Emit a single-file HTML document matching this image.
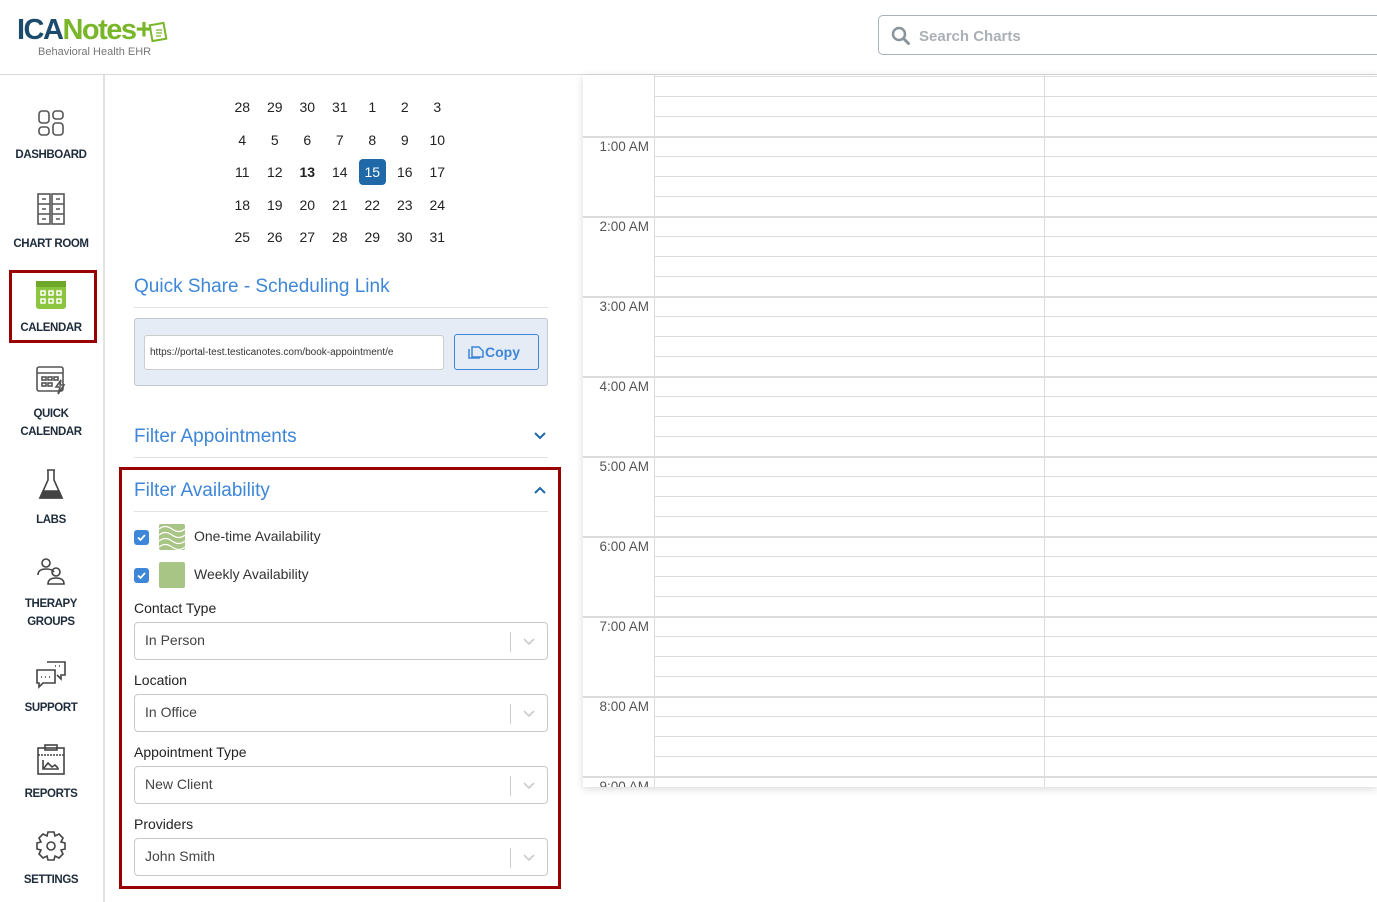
<!DOCTYPE html>
<html><head><meta charset="utf-8"><style>
*{box-sizing:border-box;margin:0;padding:0}
body{width:1377px;height:902px;overflow:hidden;background:#fff;font-family:"Liberation Sans",sans-serif;color:#222;position:relative}
.abs{position:absolute}
.top{left:0;top:0;width:1377px;height:75px;border-bottom:1px solid #d8d8d8;background:#fff}
.side{left:0;top:75px;width:105px;height:827px;border-right:2px solid #e2e2e2;background:#fff}
.nav{position:absolute;left:0;width:102px;text-align:center;font-size:11.5px;font-weight:bold;color:#1d2b3a;line-height:18px;letter-spacing:-.4px}
.nav svg{display:block;margin:0 auto 9px}
.cal td{width:32.5px;height:32.5px;text-align:center;font-size:14px;color:#222}
.h{color:#3d86d8;font-size:19px}
.sel{border:1px solid #c9c9c9;border-radius:4px;height:38px;width:414px;left:134px;font-size:14px;color:#444;padding:9px 10px}
.sel .dv{position:absolute;right:36px;top:9px;width:1px;height:20px;background:#ccc}
.sel svg{position:absolute;right:11px;top:14px}
.lbl{left:134px;font-size:14px;color:#222}
.grid{left:583px;top:75px;width:794px;height:712px;box-shadow:0 2px 8px rgba(0,0,0,.15);background:#fff;overflow:hidden}
.tl{position:absolute;left:0;width:66px;text-align:right;font-size:13.5px;color:#555}
</style></head><body>
<div class="abs top">
 <div class="abs" style="left:17px;top:12px;font-size:29px;font-weight:bold;letter-spacing:-1.5px;line-height:36px"><span style="color:#1c4b6b">ICA</span><span style="color:#7ab629">Notes+</span></div>
 <svg class="abs" style="left:148px;top:21px" width="20" height="22" viewBox="0 0 20 22"><rect x="3" y="3" width="14" height="16" transform="rotate(-10 10 11)" fill="none" stroke="#7ab629" stroke-width="2"/><path d="M8 9h6M8 12h6M8 15h5" stroke="#7ab629" stroke-width="1.3"/></svg>
 <div class="abs" style="left:38px;top:46px;font-size:11px;color:#777">Behavioral Health EHR</div>
 <div class="abs" style="left:878px;top:15px;width:520px;height:40px;border:1px solid #a9b2bb;border-radius:5px">
  <svg class="abs" style="left:12px;top:10px" width="20" height="20" viewBox="0 0 20 20"><circle cx="8" cy="8" r="6" fill="none" stroke="#8b939b" stroke-width="2.5"/><path d="M12.5 12.5l5 5" stroke="#8b939b" stroke-width="3" stroke-linecap="round"/></svg>
  <div class="abs" style="left:40px;top:12px;font-size:15px;color:#aab0b6;font-weight:bold">Search Charts</div>
 </div>
</div>
<div class="abs side">
 <div class="nav" style="top:34px"><svg width="28" height="28" viewBox="0 0 28 28" fill="none" stroke="#555" stroke-width="1.6"><rect x="2" y="2" width="10" height="12" rx="3"/><rect x="16" y="2" width="10" height="8" rx="3"/><rect x="2" y="18" width="10" height="8" rx="3"/><rect x="16" y="14" width="10" height="12" rx="3"/></svg>DASHBOARD</div>
 <div class="nav" style="top:118px"><svg width="30" height="33" viewBox="0 0 30 33" fill="none" stroke="#555" stroke-width="1.6"><rect x="2" y="1" width="12" height="30"/><rect x="16" y="1" width="12" height="30"/><path d="M2 11h12M2 21h12M16 11h12M16 21h12M6 6h4M6 16h4M6 26h4M20 6h4M20 16h4M20 26h4"/></svg>CHART ROOM</div>
 <div class="nav" style="top:203px"><svg width="32" height="32" viewBox="0 0 32 32"><rect x="1" y="3" width="30" height="28" rx="3" fill="#8cc63f"/><rect x="1" y="3" width="30" height="6" fill="#6ea82a"/><g fill="none" stroke="#fff" stroke-width="1.5"><rect x="6" y="13" width="4" height="4"/><rect x="14" y="13" width="4" height="4"/><rect x="22" y="13" width="4" height="4"/><rect x="6" y="21" width="4" height="4"/><rect x="14" y="21" width="4" height="4"/><rect x="22" y="21" width="4" height="4"/></g></svg>CALENDAR</div>
 <div class="nav" style="top:289px"><svg width="32" height="32" viewBox="0 0 32 32" fill="none" stroke="#555" stroke-width="1.6"><rect x="2" y="3" width="26" height="24" rx="2"/><path d="M2 9h26"/><rect x="7" y="13" width="4" height="3"/><rect x="13" y="13" width="4" height="3"/><rect x="19" y="13" width="4" height="3"/><rect x="7" y="19" width="4" height="3"/><rect x="13" y="19" width="4" height="3"/><path d="M26 16l-5 7h4l-2 7 6-9h-4z" fill="#fff"/></svg>QUICK<br>CALENDAR</div>
 <div class="nav" style="top:393px"><svg width="28" height="34" viewBox="0 0 28 34" fill="none" stroke="#444" stroke-width="1.6"><path d="M10 2h8M11 2v10L3 30h22L17 12V2"/><path d="M6 23h16l3 7H3z" fill="#444"/></svg>LABS</div>
 <div class="nav" style="top:481px"><svg width="30" height="30" viewBox="0 0 30 30" fill="none" stroke="#444" stroke-width="1.6"><circle cx="10" cy="7" r="4"/><path d="M2 19c0-5 4-6 8-6s7 1 8 3"/><circle cx="20" cy="16" r="4"/><path d="M12 28c0-5 4-6 8-6s8 1 8 6z"/></svg>THERAPY<br>GROUPS</div>
 <div class="nav" style="top:585px"><svg width="32" height="30" viewBox="0 0 32 30" fill="none" stroke="#444" stroke-width="1.6"><path d="M12 2h18v13h-4v4l-4-4"/><path d="M2 10h18v13H8l-4 4v-4H2z" fill="#fff"/><path d="M6 17h1M10 17h1M14 17h1M20 6h1M24 6h1"/></svg>SUPPORT</div>
 <div class="nav" style="top:669px"><svg width="30" height="32" viewBox="0 0 30 32" fill="none" stroke="#444" stroke-width="1.6"><rect x="2" y="4" width="26" height="26"/><rect x="9" y="1" width="12" height="5"/><path d="M2 11h26" stroke-dasharray="2 1"/><path d="M7 16v9h16M8 24l4-5 4 4 3-2 3 3"/></svg>REPORTS</div>
 <div class="nav" style="top:755px"><svg width="32" height="32" viewBox="0 0 32 32" fill="none" stroke="#444" stroke-width="1.6"><path d="M13 2h6l1 4 4-2 4 4-2 4 4 1v6l-4 1 2 4-4 4-4-2-1 4h-6l-1-4-4 2-4-4 2-4-4-1v-6l4-1-2-4 4-4 4 2z"/><circle cx="16" cy="16" r="4"/></svg>SETTINGS</div>
 <div class="abs" style="left:9px;top:195px;width:88px;height:73px;border:3px solid #990000"></div>
</div>
<table class="abs cal" style="left:226px;top:91px;border-collapse:collapse">
<tr><td>28</td><td>29</td><td>30</td><td>31</td><td>1</td><td>2</td><td>3</td></tr>
<tr><td>4</td><td>5</td><td>6</td><td>7</td><td>8</td><td>9</td><td>10</td></tr>
<tr><td>11</td><td>12</td><td style="font-weight:bold">13</td><td>14</td><td><span style="display:inline-block;width:27px;height:26px;line-height:26px;background:#1f69a8;color:#fff;border-radius:4px">15</span></td><td>16</td><td>17</td></tr>
<tr><td>18</td><td>19</td><td>20</td><td>21</td><td>22</td><td>23</td><td>24</td></tr>
<tr><td>25</td><td>26</td><td>27</td><td>28</td><td>29</td><td>30</td><td>31</td></tr>
</table>
<div class="abs h" style="left:134px;top:276px">Quick Share - Scheduling Link</div>
<div class="abs" style="left:134px;top:307px;width:414px;height:1px;background:#e3e3e3"></div>
<div class="abs" style="left:134px;top:318px;width:414px;height:68px;background:#e5ecf5;border:1px solid #c3c8ce;border-radius:3px">
 <div class="abs" style="left:9px;top:16px;width:300px;height:35px;background:#fff;border:1px solid #ccc;border-radius:3px;font-size:10px;color:#333;padding:11px 5px;white-space:nowrap;overflow:hidden">https://portal-test.testicanotes.com/book-appointment/e</div>
 <div class="abs" style="left:319px;top:15px;width:85px;height:36px;border:1px solid #3d86d8;border-radius:3px;color:#3d86d8;font-size:14px;font-weight:bold;padding:9px 0 0 12px"><svg width="18" height="14" viewBox="0 0 18 14" style="vertical-align:-2px" fill="none" stroke="#3d86d8" stroke-width="1.5"><path d="M2 4v9h11"/><path d="M5 2h7l4 4v6H5z"/></svg>Copy</div>
</div>
<div class="abs h" style="left:134px;top:426px">Filter Appointments</div>
<svg class="abs" style="left:533px;top:431px" width="14" height="10" viewBox="0 0 14 10"><path d="M2 2l5 5 5-5" fill="none" stroke="#1f69a8" stroke-width="2"/></svg>
<div class="abs" style="left:134px;top:457px;width:414px;height:1px;background:#e3e3e3"></div>
<div class="abs" style="left:119px;top:467px;width:442px;height:422px;border:3px solid #990000"></div>
<div class="abs h" style="left:134px;top:480px">Filter Availability</div>
<svg class="abs" style="left:533px;top:485px" width="14" height="10" viewBox="0 0 14 10"><path d="M2 8l5-5 5 5" fill="none" stroke="#1f69a8" stroke-width="2"/></svg>
<div class="abs" style="left:134px;top:511px;width:414px;height:1px;background:#e3e3e3"></div>
<div class="abs" style="left:134px;top:530px;width:15px;height:15px;background:#3d86d8;border-radius:3px"><svg width="15" height="15" viewBox="0 0 15 15"><path d="M4 7.5l2.5 2.5 4.5-5" fill="none" stroke="#fff" stroke-width="1.8"/></svg></div>
<svg class="abs" style="left:159px;top:524px" width="26" height="26" viewBox="0 0 26 26"><rect width="26" height="26" rx="2" fill="#a8c585"/><path d="M0 5q6-5 13 0t13 0M0 11q6-5 13 0t13 0M0 17q6-5 13 0t13 0M0 23q6-5 13 0t13 0" fill="none" stroke="#fff" stroke-width="1.2"/></svg>
<div class="abs" style="left:194px;top:528px;font-size:14px;color:#333">One-time Availability</div>
<div class="abs" style="left:134px;top:568px;width:15px;height:15px;background:#3d86d8;border-radius:3px"><svg width="15" height="15" viewBox="0 0 15 15"><path d="M4 7.5l2.5 2.5 4.5-5" fill="none" stroke="#fff" stroke-width="1.8"/></svg></div>
<div class="abs" style="left:159px;top:562px;width:26px;height:26px;background:#a8c585;border-radius:2px"></div>
<div class="abs" style="left:194px;top:566px;font-size:14px;color:#333">Weekly Availability</div>
<div class="abs lbl" style="top:600px">Contact Type</div>
<div class="abs sel" style="top:622px">In Person<div class="dv"></div><svg width="14" height="9" viewBox="0 0 14 9"><path d="M2 2l5 5 5-5" fill="none" stroke="#ccc" stroke-width="1.6"/></svg></div>
<div class="abs lbl" style="top:672px">Location</div>
<div class="abs sel" style="top:694px">In Office<div class="dv"></div><svg width="14" height="9" viewBox="0 0 14 9"><path d="M2 2l5 5 5-5" fill="none" stroke="#ccc" stroke-width="1.6"/></svg></div>
<div class="abs lbl" style="top:744px">Appointment Type</div>
<div class="abs sel" style="top:766px">New Client<div class="dv"></div><svg width="14" height="9" viewBox="0 0 14 9"><path d="M2 2l5 5 5-5" fill="none" stroke="#ccc" stroke-width="1.6"/></svg></div>
<div class="abs lbl" style="top:816px">Providers</div>
<div class="abs sel" style="top:838px">John Smith<div class="dv"></div><svg width="14" height="9" viewBox="0 0 14 9"><path d="M2 2l5 5 5-5" fill="none" stroke="#ccc" stroke-width="1.6"/></svg></div>

<div class="abs grid">
 <div class="abs" style="left:71px;top:0;width:723px;height:712px;background:repeating-linear-gradient(to bottom,#dcdcdc 0,#dcdcdc 1px,transparent 1px,transparent 20px,#dcdcdc 20px,#dcdcdc 21px,transparent 21px,transparent 40px,#dcdcdc 40px,#dcdcdc 41px,transparent 41px,transparent 60px,#dcdcdc 60px,#dcdcdc 62px,transparent 62px,transparent 80px);background-position:0 1px"></div>
 <div class="abs" style="left:0;top:0;width:71px;height:712px;background:repeating-linear-gradient(to bottom,transparent 0,transparent 60px,#dcdcdc 60px,#dcdcdc 62px,transparent 62px,transparent 80px);background-position:0 1px"></div>
 <div class="abs" style="left:71px;top:0;width:1px;height:712px;background:#dcdcdc"></div>
 <div class="abs" style="left:461px;top:0;width:1px;height:712px;background:#dcdcdc"></div>
 <div class="tl" style="top:64px">1:00 AM</div>
 <div class="tl" style="top:144px">2:00 AM</div>
 <div class="tl" style="top:224px">3:00 AM</div>
 <div class="tl" style="top:304px">4:00 AM</div>
 <div class="tl" style="top:384px">5:00 AM</div>
 <div class="tl" style="top:464px">6:00 AM</div>
 <div class="tl" style="top:544px">7:00 AM</div>
 <div class="tl" style="top:624px">8:00 AM</div>
 <div class="tl" style="top:704px">9:00 AM</div>
</div>
</body></html>
